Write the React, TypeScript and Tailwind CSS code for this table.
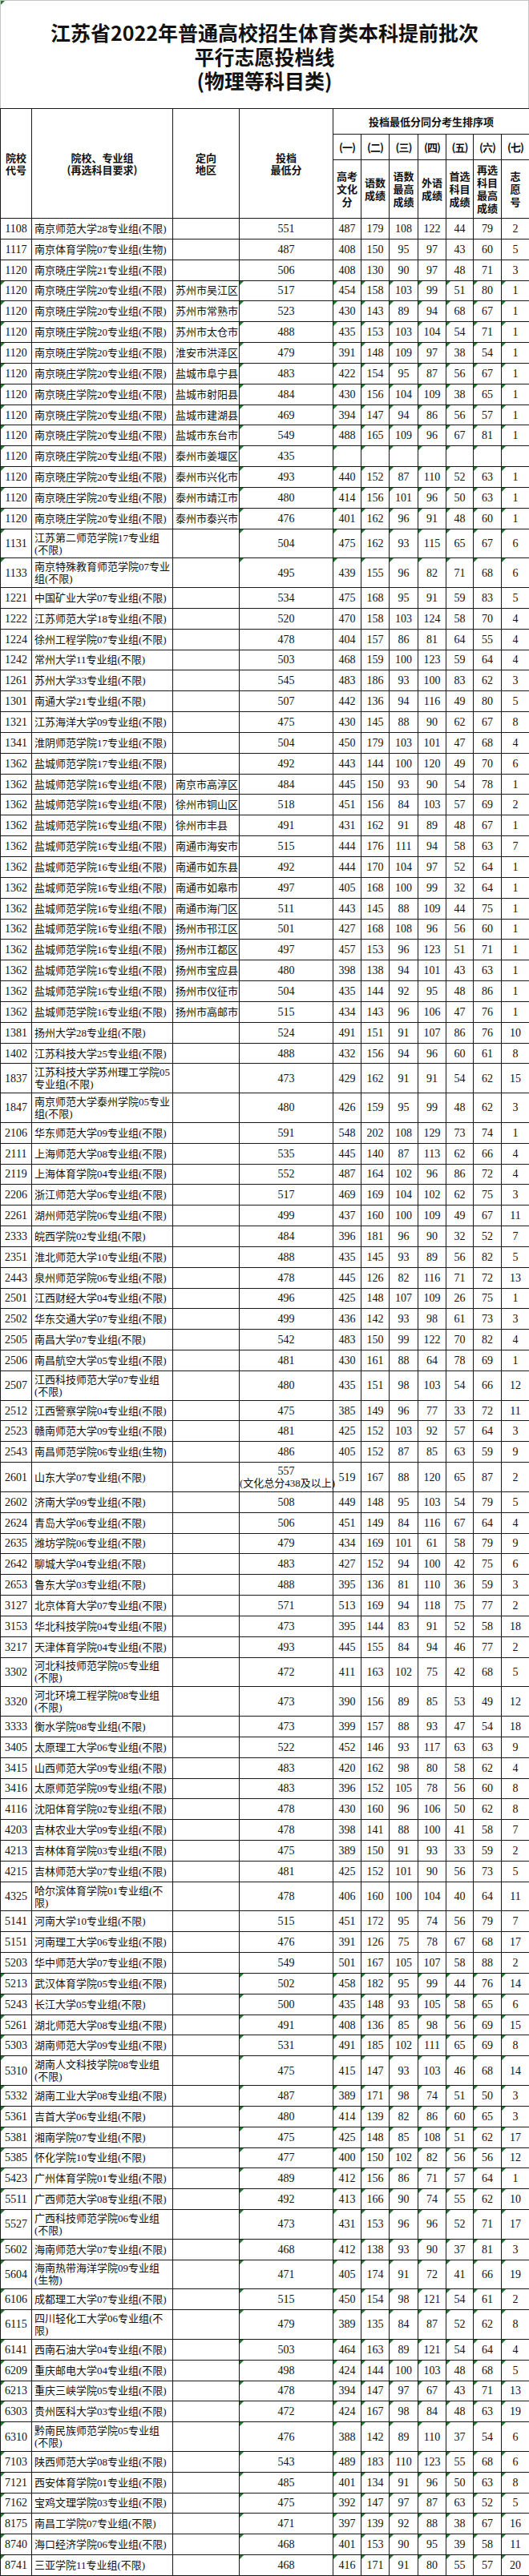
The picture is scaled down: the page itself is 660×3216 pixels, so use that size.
import type { ReactNode } from 'react';

// code | name (/ = line break) | region | score (/ = line break) | seven items | t = green marks
const RAW = `1108|南京师范大学28专业组(不限)||551|487 179 108 122 44 79 2|
1117|南京体育学院07专业组(生物)||487|408 150 95 97 43 60 5|
1120|南京晓庄学院21专业组(不限)||506|408 130 90 97 48 71 3|
1120|南京晓庄学院20专业组(不限)|苏州市吴江区|517|454 158 103 99 51 80 1|t
1120|南京晓庄学院20专业组(不限)|苏州市常熟市|523|430 143 89 94 68 67 1|t
1120|南京晓庄学院20专业组(不限)|苏州市太仓市|488|435 153 103 104 54 71 1|t
1120|南京晓庄学院20专业组(不限)|淮安市洪泽区|479|391 148 109 97 38 54 1|t
1120|南京晓庄学院20专业组(不限)|盐城市阜宁县|483|422 154 95 87 56 67 1|t
1120|南京晓庄学院20专业组(不限)|盐城市射阳县|484|430 156 104 109 38 65 1|t
1120|南京晓庄学院20专业组(不限)|盐城市建湖县|469|394 147 94 86 56 57 1|t
1120|南京晓庄学院20专业组(不限)|盐城市东台市|549|488 165 109 96 67 81 1|t
1120|南京晓庄学院20专业组(不限)|泰州市姜堰区|435||t
1120|南京晓庄学院20专业组(不限)|泰州市兴化市|493|440 152 87 110 52 63 1|t
1120|南京晓庄学院20专业组(不限)|泰州市靖江市|480|414 156 101 96 50 63 1|t
1120|南京晓庄学院20专业组(不限)|泰州市泰兴市|476|401 162 96 91 48 60 1|t
1131|江苏第二师范学院17专业组/(不限)||504|475 162 93 115 65 67 6|t
1133|南京特殊教育师范学院07专业/组(不限)||495|439 155 96 82 71 68 6|t
1221|中国矿业大学07专业组(不限)||534|475 168 95 91 59 83 5|
1222|江苏师范大学18专业组(不限)||520|470 158 103 124 58 70 4|
1224|徐州工程学院07专业组(不限)||478|404 157 86 81 64 55 4|
1242|常州大学11专业组(不限)||503|468 159 100 123 59 64 4|
1261|苏州大学33专业组(不限)||545|483 186 93 100 83 62 3|
1301|南通大学21专业组(不限)||507|442 136 94 116 49 80 5|
1321|江苏海洋大学09专业组(不限)||475|430 145 88 90 62 67 8|
1341|淮阴师范学院17专业组(不限)||504|450 179 103 101 47 68 4|
1362|盐城师范学院17专业组(不限)||492|443 144 100 120 49 70 6|
1362|盐城师范学院16专业组(不限)|南京市高淳区|484|445 150 93 90 54 78 1|
1362|盐城师范学院16专业组(不限)|徐州市铜山区|518|451 156 84 103 57 69 2|
1362|盐城师范学院16专业组(不限)|徐州市丰县|491|431 162 91 89 48 67 1|
1362|盐城师范学院16专业组(不限)|南通市海安市|515|444 176 111 94 58 63 7|
1362|盐城师范学院16专业组(不限)|南通市如东县|492|444 170 104 97 52 64 1|
1362|盐城师范学院16专业组(不限)|南通市如皋市|497|405 168 100 99 32 64 1|
1362|盐城师范学院16专业组(不限)|南通市海门区|511|443 145 88 109 44 75 1|
1362|盐城师范学院16专业组(不限)|扬州市邗江区|501|427 168 108 96 56 60 1|
1362|盐城师范学院16专业组(不限)|扬州市江都区|497|457 153 96 123 51 71 1|
1362|盐城师范学院16专业组(不限)|扬州市宝应县|480|398 138 94 101 43 63 1|
1362|盐城师范学院16专业组(不限)|扬州市仪征市|504|435 144 92 95 48 86 1|
1362|盐城师范学院16专业组(不限)|扬州市高邮市|515|434 143 96 106 47 76 1|
1381|扬州大学28专业组(不限)||524|491 151 91 107 86 76 10|
1402|江苏科技大学25专业组(不限)||488|432 156 94 96 60 61 8|
1837|江苏科技大学苏州理工学院05/专业组(不限)||473|429 162 91 91 54 62 15|
1847|南京师范大学泰州学院05专业/组(不限)||480|426 159 95 99 48 62 3|
2106|华东师范大学09专业组(不限)||591|548 202 108 129 73 74 1|
2111|上海师范大学08专业组(不限)||535|445 140 87 113 62 66 4|
2119|上海体育学院04专业组(不限)||552|487 164 102 96 86 72 4|
2206|浙江师范大学06专业组(不限)||517|469 169 104 102 62 75 3|
2261|湖州师范学院06专业组(不限)||499|437 160 100 109 49 67 11|
2333|皖西学院02专业组(不限)||484|396 181 96 90 32 52 7|
2351|淮北师范大学10专业组(不限)||488|435 145 93 89 56 82 5|
2443|泉州师范学院06专业组(不限)||478|445 126 82 116 71 72 13|
2501|江西财经大学04专业组(不限)||496|425 148 107 109 26 75 1|
2502|华东交通大学07专业组(不限)||499|436 142 93 98 61 73 3|
2505|南昌大学07专业组(不限)||542|483 150 99 122 70 82 4|
2506|南昌航空大学05专业组(不限)||481|430 161 88 64 78 69 1|
2507|江西科技师范大学07专业组/(不限)||480|435 151 98 103 54 66 12|
2512|江西警察学院04专业组(不限)||475|385 149 96 77 33 72 11|
2523|赣南师范大学09专业组(不限)||481|425 152 103 92 57 64 3|
2543|南昌师范学院06专业组(生物)||486|405 152 87 85 63 59 9|
2601|山东大学07专业组(不限)||557/(文化总分438及以上)|519 167 88 120 65 87 2|
2602|济南大学09专业组(不限)||508|449 148 95 103 54 79 5|
2624|青岛大学06专业组(不限)||506|451 149 84 116 67 64 4|
2635|潍坊学院06专业组(不限)||479|434 169 101 61 58 79 9|
2642|聊城大学04专业组(不限)||483|427 152 94 100 42 75 6|
2653|鲁东大学03专业组(不限)||488|395 136 81 110 36 59 3|
3127|北京体育大学07专业组(不限)||571|513 169 94 118 75 77 2|
3153|华北科技学院04专业组(不限)||473|395 144 83 91 52 58 18|
3217|天津体育学院04专业组(不限)||493|445 155 84 94 46 77 2|
3302|河北科技师范学院05专业组/(不限)||472|411 163 102 75 42 68 5|
3320|河北环境工程学院08专业组/(不限)||473|390 156 89 85 53 49 12|
3333|衡水学院08专业组(不限)||473|399 157 88 93 47 54 18|
3405|太原理工大学06专业组(不限)||522|452 146 93 117 63 63 9|
3415|山西师范大学09专业组(不限)||483|420 162 98 80 58 62 4|
3416|太原师范学院09专业组(不限)||483|396 152 105 78 56 60 8|
4116|沈阳体育学院02专业组(不限)||478|430 160 96 106 50 62 8|
4203|吉林农业大学09专业组(不限)||478|398 141 88 100 41 58 7|
4213|吉林体育学院03专业组(不限)||475|389 150 91 93 33 59 2|
4215|吉林师范大学07专业组(不限)||481|425 152 101 90 56 73 5|
4325|哈尔滨体育学院01专业组(不/限)||478|406 160 100 104 40 64 11|
5141|河南大学10专业组(不限)||515|451 172 95 74 56 79 7|
5151|河南理工大学06专业组(不限)||476|391 126 75 78 67 68 17|
5203|华中师范大学07专业组(不限)||549|501 167 105 107 58 88 2|
5213|武汉体育学院05专业组(不限)||502|458 182 95 99 44 76 14|t
5243|长江大学05专业组(不限)||500|435 148 93 105 58 65 6|t
5261|湖北师范大学08专业组(不限)||491|408 136 85 98 56 69 15|t
5303|湖南师范大学09专业组(不限)||531|491 185 102 111 65 69 8|t
5310|湖南人文科技学院08专业组/(不限)||475|415 147 93 103 46 68 14|t
5332|湖南工业大学08专业组(不限)||487|389 171 98 74 51 50 3|t
5361|吉首大学06专业组(不限)||480|414 139 82 86 60 65 3|t
5381|湘南学院07专业组(不限)||475|425 148 85 108 51 62 17|t
5385|怀化学院10专业组(不限)||477|400 150 102 82 56 56 12|t
5423|广州体育学院01专业组(不限)||489|412 156 86 71 57 64 1|t
5511|广西师范大学08专业组(不限)||492|413 166 90 74 55 62 10|t
5527|广西科技师范学院06专业组/(不限)||473|431 153 96 96 52 71 17|t
5602|海南师范大学07专业组(不限)||468|412 138 93 90 37 81 3|t
5604|海南热带海洋学院09专业组/(生物)||471|405 174 91 72 41 66 19|t
6106|成都理工大学07专业组(不限)||515|450 154 98 121 54 61 2|t
6115|四川轻化工大学06专业组(不/限)||479|389 135 84 87 52 62 8|t
6141|西南石油大学04专业组(不限)||503|464 163 89 121 54 64 4|t
6209|重庆邮电大学04专业组(不限)||498|424 144 100 103 48 68 5|t
6213|重庆三峡学院05专业组(不限)||478|394 147 97 67 43 71 13|t
6303|贵州医科大学03专业组(不限)||472|424 167 98 84 48 63 19|t
6310|黔南民族师范学院05专业组/(不限)||476|388 142 89 110 37 54 6|t
7103|陕西师范大学08专业组(不限)||543|489 183 110 123 55 68 6|t
7121|西安体育学院01专业组(不限)||485|401 134 91 96 50 63 8|t
7162|宝鸡文理学院03专业组(不限)||475|392 147 97 87 63 52 5|t
8175|南昌工学院07专业组(不限)||471|397 139 92 88 38 67 16|t
8740|海口经济学院06专业组(不限)||468|401 153 90 95 39 58 11|t
8741|三亚学院11专业组(不限)||468|416 171 91 80 55 57 20|t`;

interface Row {
    code: string;
    name: string[];
    region: string;
    score: string[];
    items: string[];
    marked: boolean;
}

const ROWS: Row[] = RAW.split('\n').map((line) => {
    const [code, name, region, score, items, flag] = line.split('|');
    return {
        code,
        name: name.split('/'),
        region,
        score: score.split('/'),
        items: items ? items.split(' ') : ['', '', '', '', '', '', ''],
        marked: flag === 't',
    };
});

const SORT_HEADS = ['(一)', '(二)', '(三)', '(四)', '(五)', '(六)', '(七)'];
const SORT_LABELS = [
    ['高考', '文化', '分'],
    ['语数', '成绩'],
    ['语数', '最高', '成绩'],
    ['外语', '成绩'],
    ['首选', '科目', '成绩'],
    ['再选', '科目', '最高', '成绩'],
    ['志', '愿', '号'],
];

function Mark() {
    return (
        <span className="absolute left-0 top-0 h-0 w-0 border-r-[5px] border-t-[5px] border-r-transparent border-t-[#1f7a2e]" />
    );
}

function Cell({
    children,
    marked,
    className = '',
}: {
    children?: ReactNode;
    marked?: boolean;
    className?: string;
}) {
    return (
        <td className={`relative border border-[#1a1a1a] p-0 ${className}`}>
            {marked && <Mark />}
            {children}
        </td>
    );
}

function Lines({ lines }: { lines: string[] }) {
    return (
        <>
            {lines.map((l, i) => (
                <div key={i} className="whitespace-nowrap">
                    {l}
                </div>
            ))}
        </>
    );
}

export default function App() {
    return (
        <div className="w-[660px] bg-white text-[#111] font-['Liberation_Serif','Noto_Sans_CJK_SC',serif]">
            <div className="relative flex h-[135px] flex-col items-center justify-center border-x border-t border-[#c4c4c4] pt-1 font-['Noto_Sans_CJK_SC',sans-serif] text-[25px] font-bold leading-[30px]">
                <Mark />
                <div>江苏省2022年普通高校招生体育类本科提前批次</div>
                <div>平行志愿投档线</div>
                <div>(物理等科目类)</div>
            </div>

            <table className="w-[660px] table-fixed border-collapse text-[13px] leading-[15px]">
                <colgroup>
                    <col className="w-[39px]" />
                    <col className="w-[176px]" />
                    <col className="w-[83px]" />
                    <col className="w-[117px]" />
                    <col className="w-[35px]" />
                    <col className="w-[35px]" />
                    <col className="w-[36px]" />
                    <col className="w-[35px]" />
                    <col className="w-[34px]" />
                    <col className="w-[35px]" />
                    <col className="w-[35px]" />
                </colgroup>
                <thead className="font-['Noto_Sans_CJK_SC',sans-serif] font-bold">
                    <tr className="h-[32px]">
                        <th rowSpan={3} className="border border-[#1a1a1a] p-0 font-bold">
                            <Lines lines={['院校', '代号']} />
                        </th>
                        <th rowSpan={3} className="border border-[#1a1a1a] p-0 font-bold">
                            <Lines lines={['院校、专业组', '(再选科目要求)']} />
                        </th>
                        <th rowSpan={3} className="border border-[#1a1a1a] p-0 font-bold">
                            <Lines lines={['定向', '地区']} />
                        </th>
                        <th rowSpan={3} className="border border-[#1a1a1a] p-0 font-bold">
                            <Lines lines={['投档', '最低分']} />
                        </th>
                        <th colSpan={7} className="border border-[#1a1a1a] p-0 font-bold">
                            投档最低分同分考生排序项
                        </th>
                    </tr>
                    <tr className="h-[32px]">
                        {SORT_HEADS.map((h) => (
                            <th key={h} className="border border-[#1a1a1a] p-0 font-bold tracking-[-1px]">
                                {h}
                            </th>
                        ))}
                    </tr>
                    <tr className="h-[73px]">
                        {SORT_LABELS.map((l, i) => (
                            <th key={i} className="border border-[#1a1a1a] p-0 font-bold leading-[16px]">
                                <Lines lines={l} />
                            </th>
                        ))}
                    </tr>
                </thead>
                <tbody>
                    {ROWS.map((row, i) => {
                        const tall = row.name.length > 1 || row.score.length > 1;
                        return (
                            <tr key={i} className={tall ? 'h-[36.7px]' : 'h-[25.85px]'}>
                                <Cell marked={row.marked} className="text-center text-[14px]">
                                    {row.code}
                                </Cell>
                                <Cell className="pl-[3px] text-left">
                                    <Lines lines={row.name} />
                                </Cell>
                                <Cell className="pl-[3px] text-left">{row.region}</Cell>
                                <Cell marked={row.marked} className="text-center text-[14px]">
                                    {row.score.map((s, k) => (
                                        <div key={k} className={k > 0 ? 'whitespace-nowrap text-[13px]' : 'whitespace-nowrap'}>
                                            {s}
                                        </div>
                                    ))}
                                </Cell>
                                {row.items.map((v, j) => (
                                    <Cell key={j} marked={row.marked} className="text-center text-[14px]">
                                        {v}
                                    </Cell>
                                ))}
                            </tr>
                        );
                    })}
                </tbody>
            </table>
        </div>
    );
}
